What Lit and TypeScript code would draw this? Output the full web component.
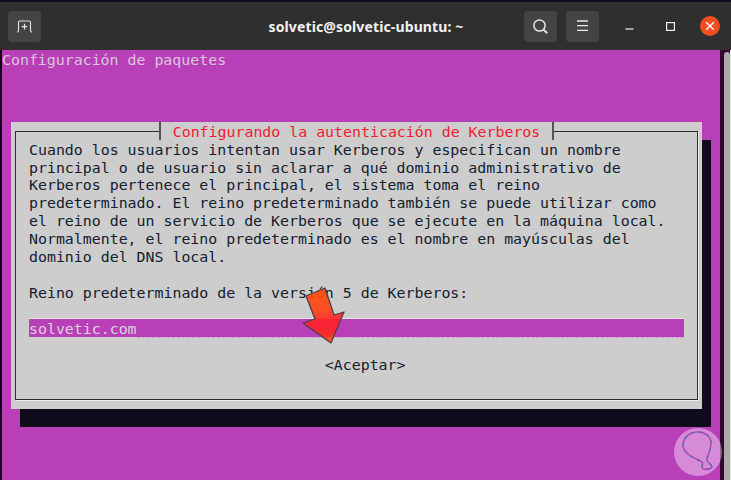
import { LitElement, html, css, svg } from "lit";
import { customElement } from "lit/decorators.js";

const BODY = [
  "Cuando los usuarios intentan usar Kerberos y especifican un nombre",
  "principal o de usuario sin aclarar a qué dominio administrativo de",
  "Kerberos pertenece el principal, el sistema toma el reino",
  "predeterminado. El reino predeterminado también se puede utilizar como",
  "el reino de un servicio de Kerberos que se ejecute en la máquina local.",
  "Normalmente, el reino predeterminado es el nombre en mayúsculas del",
  "dominio del DNS local.",
  "",
  "Reino predeterminado de la versión 5 de Kerberos:",
  "",
];

@customElement("app-root")
export class AppRoot extends LitElement {
  static styles = css`
    :host {
      display: block;
      width: 731px;
      height: 480px;
      overflow: hidden;
      position: relative;
      --row: 17.93px;
      background: #2f2f2f;
    }
    .window { display: flex; flex-direction: column; height: 480px; }
    .header {
      height: 48px;
      border-top: 2px solid #0e0e20;
      background: #2f2f2f;
      display: grid;
      grid-template-columns: 1fr auto 1fr;
      align-items: center;
      padding: 0 11px 0 8px;
      flex: none;
    }
    .h-left, .h-right { display: flex; align-items: center; }
    .h-right { justify-content: flex-end; }
    .btn {
      width: 33px;
      height: 31px;
      background: #444446;
      border-radius: 4px;
      display: flex;
      align-items: center;
      justify-content: center;
    }
    .btn svg, .ctl svg { display: block; }
    .btn + .btn { margin-left: 9px; }
    .ctl { width: 20px; height: 20px; display: flex; align-items: center; justify-content: center; }
    .ctl.min { margin-left: 20px; }
    .ctl.max { margin-left: 21px; }
    .ctl.close { margin-left: 20px; background: #f04e1f; border-radius: 50%; }
    .title {
      color: #f2f2f2;
      font: bold 14px "Noto Sans", "Open Sans", sans-serif;
      letter-spacing: 0.13px;
      white-space: nowrap;
      margin-left: 4px;
    }
    .main { flex: 1; display: flex; min-height: 0; background: #b93fb9; }
    .edge { width: 2px; background: #12041a; flex: none; }
    .term {
      flex: 1;
      min-width: 0;
      font: 14.9px/calc(var(--row) + 4px) "DejaVu Sans Mono", monospace;
      color: #d9c6d9;
    }
    .row { height: var(--row); white-space: pre; }
    .status { margin-bottom: calc(3 * var(--row)); }
    .dialog {
      margin-left: 9px;
      width: 691px;
      height: calc(16 * var(--row));
      box-sizing: border-box;
      background: #cdcdcd;
      box-shadow: 9px 18px 0 #0f0b1c;
      padding: 9px 4px;
      display: flex;
      flex-direction: column;
      color: #14202e;
    }
    .frame {
      flex: 1;
      border: 1px solid #2e2e2e;
      box-shadow: 1px 1px 0 #eeeeee;
      display: flex;
      flex-direction: column;
      padding: 0 13px;
    }
    .frame-top {
      height: var(--row);
      margin-top: -10px;
      display: flex;
      justify-content: center;
    }
    .cap {
      color: #f01c30;
      padding: 0 11.5px;
      background: #cdcdcd;
      border-left: 2px solid #555;
      border-right: 2px solid #555;
      white-space: pre;
    }
    .field {
      height: var(--row);
      background: #b93fb9;
      color: #dcd2dc;
      display: flex;
      border-top: 1px solid #e4e4dc;
      margin-top: -1px;
    }
    .field .fill { flex: 1; border-bottom: 1px dashed #d79ad7; margin-bottom: -1px; }
    .ok { margin-top: var(--row); padding-left: 33ch; }
    .side { width: 11px; flex: none; display: flex; background: #35062f; padding-left: 4px; box-sizing: border-box; }
    .side .sb { width: 6px; margin-top: 2px; background: #ababab; border-radius: 3px 3px 0 0; }
    .side .rim { width: 1px; background: #e6e6e6; }
    .arrow { position: absolute; left: 296px; top: 282px; }
    .mark { position: absolute; left: 670px; top: 424px; }
  `;

  render() {
    return html`
      <div class="window">
        <div class="header">
          <div class="h-left">
            <div class="btn">
              <svg width="17" height="13" viewBox="0 0 17 13" fill="none" stroke="#e6e6e6" stroke-width="1.1">
                <path d="M1 12.2c1.2 0 1.5-.4 1.5-1.6V2.4c0-1 .4-1.4 1.4-1.4h9.2c1 0 1.4.4 1.4 1.4v8.2c0 1.2.3 1.6 1.5 1.6"/>
                <path d="M8.5 3.8v5.6M5.7 6.6h5.6" stroke-width="1.2"/>
              </svg>
            </div>
          </div>
          <div class="title">solvetic@solvetic-ubuntu: ~</div>
          <div class="h-right">
            <div class="btn">
              <svg width="17" height="17" viewBox="0 0 17 17" fill="none" stroke="#e6e6e6">
                <circle cx="7.5" cy="7.5" r="5.6" stroke-width="1.5"/>
                <path d="M11.6 11.6l3.6 3.6" stroke-width="2"/>
              </svg>
            </div>
            <div class="btn">
              <svg width="13" height="12" viewBox="0 0 13 12" stroke="#ececec" stroke-width="1.3">
                <path d="M1 1h11M1 5.7h11M1 10.4h11"/>
              </svg>
            </div>
            <div class="ctl min">
              <svg width="9" height="20" viewBox="0 0 9 20"><path d="M0.5 13h8" stroke="#f0f0f0" stroke-width="1.2"/></svg>
            </div>
            <div class="ctl max">
              <svg width="9" height="9" viewBox="0 0 9 9"><rect x=".6" y=".6" width="7.8" height="7.8" fill="none" stroke="#f0f0f0" stroke-width="1.2"/></svg>
            </div>
            <div class="ctl close">
              <svg width="10" height="10" viewBox="0 0 10 10"><path d="M1.2 1.2l7.6 7.6M8.8 1.2l-7.6 7.6" stroke="#fff" stroke-width="1.4"/></svg>
            </div>
          </div>
        </div>
        <div class="main">
          <div class="edge"></div>
          <div class="term">
            <div class="row status">Configuración de paquetes</div>
            <div class="dialog">
              <div class="frame">
                <div class="frame-top"><div class="cap">Configurando la autenticación de Kerberos</div></div>
                ${BODY.map((l) => html`<div class="row">${l}</div>`)}
                <div class="field"><span>solvetic.com</span><span class="fill"></span></div>
                <div class="row ok">&lt;Aceptar&gt;</div>
              </div>
            </div>
          </div>
          <div class="side"><div class="sb"></div><div class="rim"></div></div>
        </div>
      </div>
      <svg class="arrow" width="56" height="68" viewBox="296 282 56 68">
        <defs>
          <linearGradient id="ag" x1="0.5" y1="0" x2="0.6" y2="1">
            <stop offset="0" stop-color="#ff4f0c"/>
            <stop offset=".42" stop-color="#ff4318"/>
            <stop offset=".62" stop-color="#ff1f2e"/>
            <stop offset=".85" stop-color="#fb2a24"/>
            <stop offset="1" stop-color="#f8630f"/>
          </linearGradient>
        </defs>
        <path d="M306 296L325 288L334 315L344 312L331 343L303 323L315 319Z" fill="url(#ag)" fill-opacity=".93" stroke="#4a4048" stroke-width="1.3" stroke-linejoin="round"/>
      </svg>
      <svg class="mark" width="56" height="56" viewBox="670 424 56 56" fill="none">
        <circle cx="698" cy="452" r="24" fill="#fff" fill-opacity=".4"/>
        ${svg`<path d="M683 446C683 436 692 431 699 432C707 433 712 438 711 445C710 452 707 456 707 460C707 463 713 465 712 467C710 470 702 470 702 467C702 464 704 464 702 462C698 459 692 458 688 454C685 451 683 449 683 446Z" stroke="#b23db8" stroke-width="1.4"/>
        <path d="M683 446C683 436 692 431 699 432C707 433 712 438 711 445C710 452 707 456 707 460C707 463 713 465 712 467C710 470 702 470 702 467C702 464 704 464 702 462C698 459 692 458 688 454C685 451 683 449 683 446Z" stroke="#1f86b5" stroke-width="1.4" stroke-dasharray="2 6"/>`}
      </svg>
    `;
  }
}
